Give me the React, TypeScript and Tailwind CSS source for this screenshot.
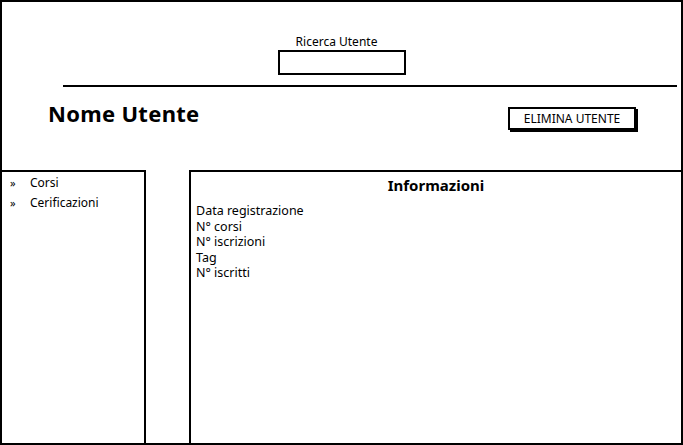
const font = { fontFamily: '"Noto Sans", "Liberation Sans", sans-serif' }

const infoRows = ["Data registrazione", "N° corsi", "N° iscrizioni", "Tag", "N° iscritti"]
const menu = ["Corsi", "Cerificazioni"]

export default function App() {
  return (
    <div
      className="w-[683px] h-[445px] bg-white border-2 border-black flex flex-col text-black overflow-hidden"
      style={font}
    >
      {/* Header */}
      <div className="h-[168px] shrink-0 flex flex-col">
        <div className="flex flex-col items-center pt-[32px]">
          <span className="text-[12px] leading-[16px] ml-[-10px]">Ricerca Utente</span>
          <div className="w-[128px] h-[25px] border-2 border-black bg-white" />
        </div>
        <div className="mt-[10px] ml-[61px] mr-[4px] h-[2px] bg-black" />
        <div className="flex items-start justify-between pl-[46px] pr-[45px] mt-[12px]">
          <h1 className="text-[22px] leading-[28px] font-bold tracking-[0.3px]">Nome Utente</h1>
          <button className="w-[128px] h-[23px] border-2 border-black bg-white text-[12px] leading-[18px] mt-[8px] shadow-[2px_2px_0_0_#000]">
            ELIMINA UTENTE
          </button>
        </div>
      </div>

      {/* Body */}
      <div className="flex flex-1 min-h-0">
        <div className="w-[144px] border-t-2 border-r-2 border-black pt-[1px] pl-[8px]">
          {menu.map((m) => (
            <div key={m} className="flex items-center h-[20px] text-[12px]">
              <span className="w-[20px] text-[11px]">»</span>
              <span>{m}</span>
            </div>
          ))}
        </div>
        <div className="w-[43px]" />
        <div className="flex-1 border-t-2 border-l-2 border-black px-[5px] pt-[3px]">
          <h2 className="text-center text-[15px] leading-[20px] font-bold">Informazioni</h2>
          <div className="mt-[8px] text-[12.5px] leading-[15.5px]">
            {infoRows.map((r) => (
              <div key={r}>{r}</div>
            ))}
          </div>
        </div>
      </div>
    </div>
  )
}
